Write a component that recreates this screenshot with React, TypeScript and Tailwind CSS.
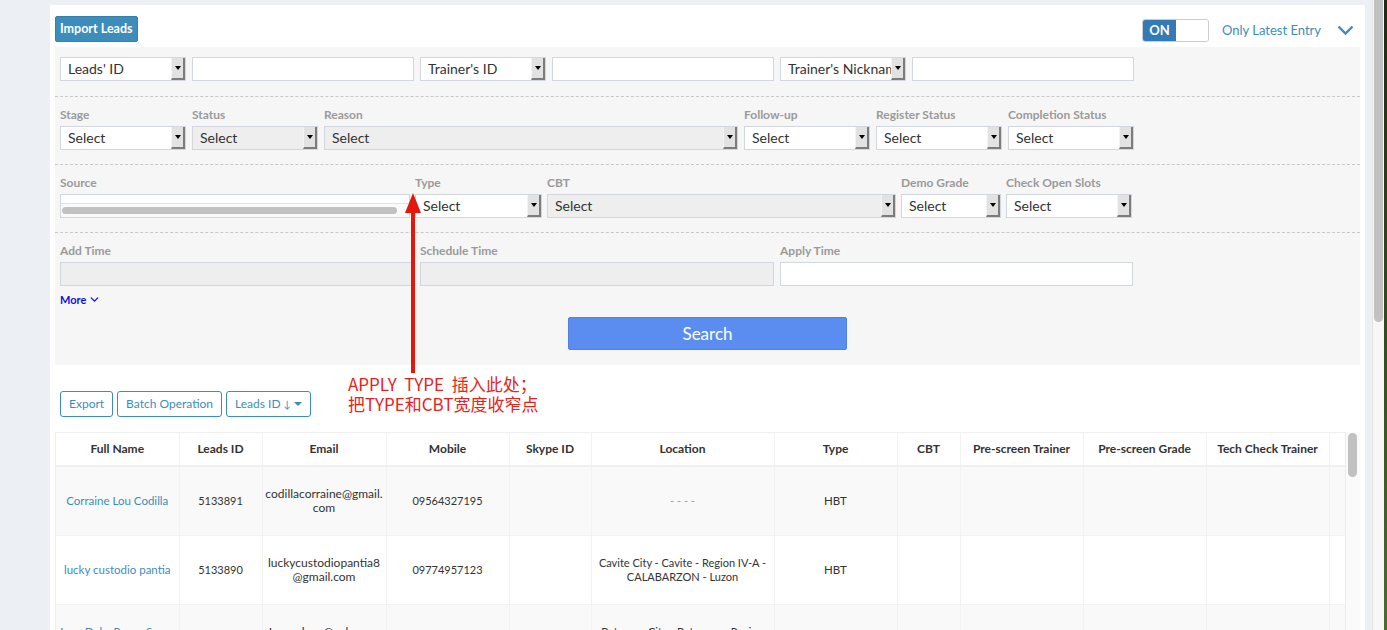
import { ChevronDown } from "lucide-react";

interface SelProps {
  text?: string;
  w: string;
  gray?: boolean;
}

function Sel({ text = "Select", w, gray }: SelProps) {
  return (
    <div className={`flex h-[24px] shrink-0 border border-[#d2d6de] ${gray ? "bg-[#eeeeee]" : "bg-white"} ${w}`}>
      <span className="flex-1 overflow-hidden whitespace-nowrap pl-[7px] text-[14px] leading-[22px] text-[#333]">{text}</span>
      <span className="flex w-[14px] shrink-0 items-center justify-center border-b-2 border-l border-r-2 border-b-[#7c7c7c] border-l-[#f4f4f4] border-r-[#7c7c7c] bg-[#e2e2e2]">
        <span className="h-0 w-0 border-l-[3px] border-r-[3px] border-t-[4px] border-l-transparent border-r-transparent border-t-black" />
      </span>
    </div>
  );
}

function Input({ w, gray }: { w: string; gray?: boolean }) {
  return <div className={`h-[24px] shrink-0 border border-[#d2d6de] ${gray ? "bg-[#eeeeee]" : "bg-white"} ${w}`} />;
}

function Field({ label, children }: { label: string; children: React.ReactNode }) {
  return (
    <div className="flex flex-col gap-[4px]">
      <span className="h-[14px] whitespace-nowrap text-[12px] font-bold leading-[14px] text-[#9a9a9a]">{label}</span>
      {children}
    </div>
  );
}

const cols: [string, string][] = [
  ["Full Name", "w-[123px]"],
  ["Leads ID", "w-[83px]"],
  ["Email", "w-[124px]"],
  ["Mobile", "w-[123px]"],
  ["Skype ID", "w-[82px]"],
  ["Location", "w-[183px]"],
  ["Type", "w-[123px]"],
  ["CBT", "w-[63px]"],
  ["Pre-screen Trainer", "w-[123px]"],
  ["Pre-screen Grade", "w-[123px]"],
  ["Tech Check Trainer", "w-[123px]"],
  ["", "w-[123px]"],
];

const rows = [
  {
    name: ["Corraine Lou Codilla"],
    id: "5133891",
    email: ["codillacorraine@gmail.", "com"],
    mobile: "09564327195",
    location: ["- - - -"],
    type: "HBT",
  },
  {
    name: ["lucky custodio pantia"],
    id: "5133890",
    email: ["luckycustodiopantia8", "@gmail.com"],
    mobile: "09774957123",
    location: ["Cavite City - Cavite - Region IV-A -", "CALABARZON - Luzon"],
    type: "HBT",
  },
  {
    name: ["Joan DelosReyes Sanga", "lang"],
    id: "5133889",
    email: ["Jsangalang@yahoo.co", "m"],
    mobile: "09171183302",
    location: ["Batangas City - Batangas - Region", "IV-A - CALABARZON - Luzon"],
    type: "HBT",
  },
];

function Lines({ lines }: { lines: string[] }) {
  return (
    <>
      {lines.map((l, i) => (
        <span key={i} className="block whitespace-nowrap">
          {l}
        </span>
      ))}
    </>
  );
}

export default function App() {
  return (
    <div className="relative flex h-[630px] w-[1387px] overflow-hidden bg-[#ecf0f5] font-['Lato',sans-serif] text-[#333]">
      <div className="w-[50px] shrink-0" />

      <div className="mt-[5px] w-[1315px] shrink-0 bg-white px-[5px]">
        {/* top bar */}
        <div className="flex h-[42px] items-end justify-between pb-[5px]">
          <button className="h-[26px] rounded-[2px] border border-[#367fa9] bg-[#3c8dbc] px-[4px] text-[12.5px] font-bold text-white">
            Import Leads
          </button>
          <div className="flex items-center pr-[6px]">
            <div className="flex h-[23px] w-[67px] overflow-hidden rounded-[3px] border border-[#ccc]">
              <span className="flex w-[33px] items-center justify-center bg-[#337ab7] text-[13px] font-bold text-white">ON</span>
              <span className="flex-1 bg-white" />
            </div>
            <span className="ml-[13px] text-[13px] text-[#3c8dbc]">Only Latest Entry</span>
            <svg className="ml-[16px]" width="17" height="11" viewBox="0 0 17 11" fill="none">
              <polyline points="1.5,1.5 8.5,8.5 15.5,1.5" stroke="#3c8dbc" strokeWidth="2.4" />
            </svg>
          </div>
        </div>

        {/* filters */}
        <div className="bg-[#f6f6f6] pb-[15px]">
          <div className="flex gap-[6px] px-[5px] pb-[15px] pt-[10px]">
            <Sel text="Leads' ID" w="w-[126px]" />
            <Input w="w-[222px]" />
            <Sel text="Trainer's ID" w="w-[126px]" />
            <Input w="w-[222px]" />
            <Sel text="Trainer's Nicknam" w="w-[126px]" />
            <Input w="w-[222px]" />
          </div>

          <div className="flex gap-[6px] border-t border-dashed border-[#c8c8c8] px-[5px] pb-[14px] pt-[11px]">
            <Field label="Stage">
              <Sel w="w-[126px]" />
            </Field>
            <Field label="Status">
              <Sel w="w-[126px]" gray />
            </Field>
            <Field label="Reason">
              <Sel w="w-[414px]" gray />
            </Field>
            <Field label="Follow-up">
              <Sel w="w-[126px]" />
            </Field>
            <Field label="Register Status">
              <Sel w="w-[126px]" />
            </Field>
            <Field label="Completion Status">
              <Sel w="w-[126px]" />
            </Field>
          </div>

          <div className="flex gap-[5px] border-t border-dashed border-[#c8c8c8] px-[5px] pb-[14px] pt-[11px]">
            <Field label="Source">
              <div className="flex h-[24px] w-[350px] flex-col border border-[#d2d6de] bg-white">
                <div className="h-[9px] border-b border-[#e2e2e2]" />
                <div className="flex flex-1 items-center bg-[#fafafa] px-[1px]">
                  <div className="h-[7px] w-[335px] rounded-full bg-[#c1c1c1]" />
                </div>
              </div>
            </Field>
            <Field label="Type">
              <Sel w="w-[127px]" />
            </Field>
            <Field label="CBT">
              <Sel w="w-[349px]" gray />
            </Field>
            <Field label="Demo Grade">
              <Sel w="w-[100px]" />
            </Field>
            <Field label="Check Open Slots">
              <Sel w="w-[126px]" />
            </Field>
          </div>

          <div className="border-t border-dashed border-[#c8c8c8] px-[5px] pt-[11px]">
            <div className="flex gap-[6px]">
              <Field label="Add Time">
                <Input w="w-[354px]" gray />
              </Field>
              <Field label="Schedule Time">
                <Input w="w-[354px]" gray />
              </Field>
              <Field label="Apply Time">
                <Input w="w-[353px]" />
              </Field>
            </div>
            <div className="mt-[7px] flex items-center gap-[2px] text-[11px] font-bold leading-[13px] text-[#1010e0]">
              More
              <ChevronDown size={13} strokeWidth={2.5} />
            </div>
          </div>

          <div className="mt-[11px] flex justify-center">
            <button className="h-[33px] w-[279px] rounded-[2px] border border-[#4f82e0] bg-[#5a8def] text-[17px] text-white">
              Search
            </button>
          </div>
        </div>

        {/* action buttons */}
        <div className="mt-[26px] flex gap-[4px] px-[5px]">
          <button className="h-[26px] rounded-[3px] border border-[#3c8dbc] px-[8px] text-[12px] text-[#3c8dbc]">Export</button>
          <button className="h-[26px] rounded-[3px] border border-[#3c8dbc] px-[8px] text-[12px] text-[#3c8dbc]">Batch Operation</button>
          <button className="flex h-[26px] items-center gap-[3px] rounded-[3px] border border-[#3c8dbc] px-[8px] text-[12px] text-[#3c8dbc]">
            Leads ID
            <span className="text-[10px]">↓</span>
            <span className="h-0 w-0 border-l-[4px] border-r-[4px] border-t-[4px] border-l-transparent border-r-transparent border-t-[#3c8dbc]" />
          </button>
        </div>

        {/* table */}
        <div className="mt-[15px] flex">
          <div className="w-[1290px] overflow-hidden border-l border-t border-[#f0f0f0]">
            <table className="w-[1396px] table-fixed border-collapse text-[12px]">
              <colgroup>
                {cols.map(([, w], i) => (
                  <col key={i} className={w} />
                ))}
              </colgroup>
              <thead>
                <tr className="h-[33px] border-b-2 border-[#f0f0f0]">
                  {cols.map(([c], i) => (
                    <th key={i} className="whitespace-nowrap border-r border-[#f2f2f2] text-center font-bold text-[#333]">
                      {c}
                    </th>
                  ))}
                </tr>
              </thead>
              <tbody>
                {rows.map((r, i) => (
                  <tr key={i} className={`border-t border-[#f2f2f2] ${i % 2 === 0 ? "bg-[#f9f9f9]" : "bg-white"}`}>
                    <td className="border-r border-[#f2f2f2] py-[20px] text-center text-[11.5px] leading-[14px] text-[#3c8dbc]">
                      <Lines lines={r.name} />
                    </td>
                    <td className="border-r border-[#f2f2f2] text-center text-[11px]">{r.id}</td>
                    <td className="border-r border-[#f2f2f2] py-[20px] text-center leading-[14px]">
                      <Lines lines={r.email} />
                    </td>
                    <td className="border-r border-[#f2f2f2] text-center text-[11px]">{r.mobile}</td>
                    <td className="border-r border-[#f2f2f2]" />
                    <td className={`border-r border-[#f2f2f2] py-[20px] text-center text-[11px] leading-[14px] ${r.location.length === 1 ? "text-[#999]" : ""}`}>
                      <Lines lines={r.location} />
                    </td>
                    <td className="border-r border-[#f2f2f2] text-center text-[11.5px]">{r.type}</td>
                    <td className="border-r border-[#f2f2f2]" />
                    <td className="border-r border-[#f2f2f2]" />
                    <td className="border-r border-[#f2f2f2]" />
                    <td className="border-r border-[#f2f2f2]" />
                    <td className="border-r border-[#f2f2f2]" />
                  </tr>
                ))}
              </tbody>
            </table>
          </div>
          <div className="w-[15px] shrink-0 border-l border-[#ececec] bg-[#fafafa] pl-[2px] pt-[1px]">
            <div className="h-[44px] w-[9px] rounded-full bg-[#c1c1c1]" />
          </div>
        </div>
      </div>

      <div className="w-[7px] shrink-0" />
      <div className="w-[12px] shrink-0 border-l border-[#e4e4e4] bg-[#f7f7f7] pl-[1px]">
        <div className="h-[322px] w-[9px] rounded-b-full bg-[#c1c1c1]" />
      </div>
      <div className="flex-1 bg-gradient-to-b from-[#1f2a17] to-[#4e6a2a]" />

      {/* annotation overlay */}
      <svg className="absolute left-[404px] top-[193px]" width="18" height="180" viewBox="0 0 18 180">
        <polygon points="9,0 1,20 17,20" fill="#e4170f" />
        <rect x="7" y="18" width="4" height="162" fill="#e4170f" />
      </svg>
      <div className="absolute left-[348px] top-[374px] font-['Noto_Sans_CJK_SC',sans-serif] text-[17px] leading-[20px] text-[#e8221b]">
        <div className="whitespace-pre">APPLY  TYPE  插入此处；</div>
        <div>把TYPE和CBT宽度收窄点</div>
      </div>
    </div>
  );
}
